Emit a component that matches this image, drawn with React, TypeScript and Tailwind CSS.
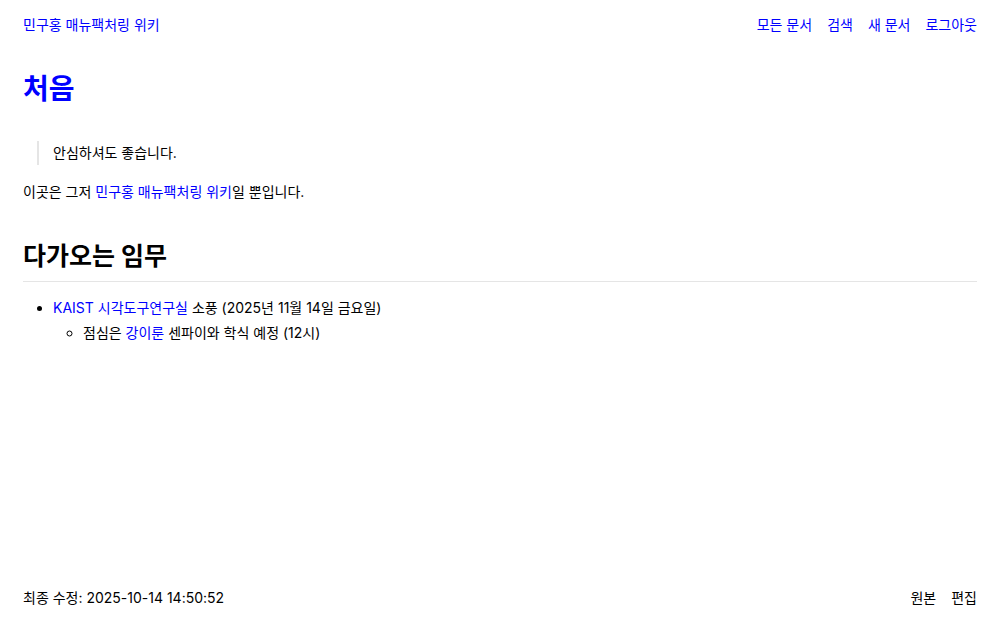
import React from "react";

const font = { fontFamily: '"Inter", "Noto Sans CJK KR", sans-serif' };

export default function App() {
  return (
    <div
      className="flex min-h-[625px] flex-col bg-white px-[23px] text-[14px] leading-[20px] text-black"
      style={font}
    >
      <header className="flex items-center justify-between pt-[15px]">
        <a className="text-[#0000ff]">민구홍 매뉴팩처링 위키</a>
        <nav className="flex gap-[15px] text-[#0000ff]">
          <a>모든 문서</a>
          <a>검색</a>
          <a>새 문서</a>
          <a>로그아웃</a>
        </nav>
      </header>
      <main className="flex-1">
        <h1 className="mt-[33px] text-[28px] font-bold leading-[42px] text-[#0000ff]">처음</h1>
        <blockquote className="ml-[14px] mt-[31px] border-l-[2px] border-[#e5e5e5] py-[2px] pl-[14px]">
          안심하셔도 좋습니다.
        </blockquote>
        <p className="mt-[17px]">
          이곳은 그저 <a className="text-[#0000ff]">민구홍 매뉴팩처링 위키</a>일 뿐입니다.
        </p>
        <h2 className="mt-[36px] border-b border-[#e5e5e5] pb-[7px] text-[25px] font-bold leading-[36px]">
          다가오는 임무
        </h2>
        <ul className="mt-[13px] list-disc pl-[30px] leading-[25px]">
          <li>
            <a className="text-[#0000ff]">KAIST 시각도구연구실</a> 소풍 (2025년 11월 14일 금요일)
            <ul className="list-[circle] pl-[30px]">
              <li>
                점심은 <a className="text-[#0000ff]">강이룬</a> 센파이와 학식 예정 (12시)
              </li>
            </ul>
          </li>
        </ul>
      </main>
      <footer className="flex items-center justify-between pb-[17px]">
        <span>최종 수정: 2025-10-14 14:50:52</span>
        <div className="flex gap-[15px]">
          <a>원본</a>
          <a>편집</a>
        </div>
      </footer>
    </div>
  );
}
